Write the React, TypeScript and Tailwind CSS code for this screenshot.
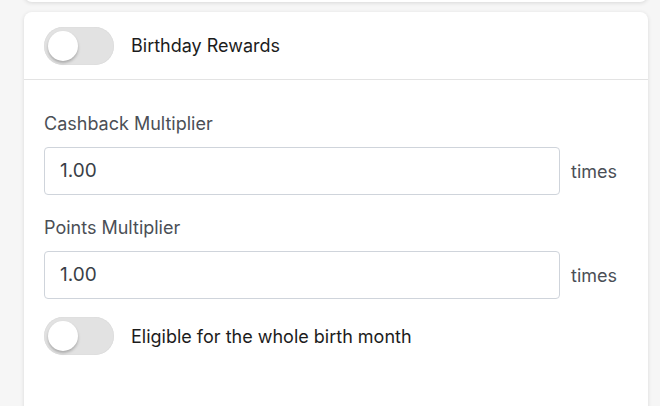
import React from 'react';

const Toggle: React.FC = () => (
  <div className="relative h-[38px] w-[70px] shrink-0 rounded-full bg-[#e2e2e2] shadow-[inset_0_0_1px_rgba(0,0,0,0.15)]">
    <div className="absolute left-[4px] top-[4px] h-[30px] w-[30px] rounded-full bg-white shadow-[0_2px_3px_rgba(0,0,0,0.25)]"></div>
  </div>
);

const MultiplierField: React.FC<{ label: string }> = ({ label }) => (
  <div className="flex flex-col">
    <div className="text-[18px] leading-[24px] text-[#4b4f56]">{label}</div>
    <div className="mt-[11px] flex items-center">
      <div className="flex h-[48px] w-[516px] items-center rounded-[4px] border border-[#cfd4db] bg-white px-[15px] text-[19px] text-[#3a3f47]">
        1.00
      </div>
      <span className="ml-[11px] text-[18px] text-[#4b4f56]">times</span>
    </div>
  </div>
);

export default function App() {
  return (
    <div
      className="h-[406px] w-[660px] overflow-hidden bg-[#f6f6f6]"
      style={{ fontFamily: 'Inter, "Noto Sans", sans-serif' }}
    >
      <div className="ml-[24px] mr-[12px] -mt-[20px] h-[22px] rounded-b-[8px] bg-white shadow-[0_1px_4px_rgba(0,0,0,0.12)]"></div>
      <div className="ml-[24px] mr-[12px] mt-[10px] h-[420px] rounded-[8px] bg-white shadow-[0_1px_4px_rgba(0,0,0,0.12)]">
        <div className="flex h-[68px] items-center border-b border-[#e3e3e3] px-[20px]">
          <Toggle />
          <span className="ml-[17px] text-[18px] text-[#1c1c1c]">Birthday Rewards</span>
        </div>
        <div className="flex flex-col px-[20px] pt-[32px]">
          <MultiplierField label="Cashback Multiplier" />
          <div className="mt-[21px]">
            <MultiplierField label="Points Multiplier" />
          </div>
          <div className="mt-[18px] flex items-center">
            <Toggle />
            <span className="ml-[17px] text-[18px] text-[#1c1c1c]">Eligible for the whole birth month</span>
          </div>
        </div>
      </div>
    </div>
  );
}
